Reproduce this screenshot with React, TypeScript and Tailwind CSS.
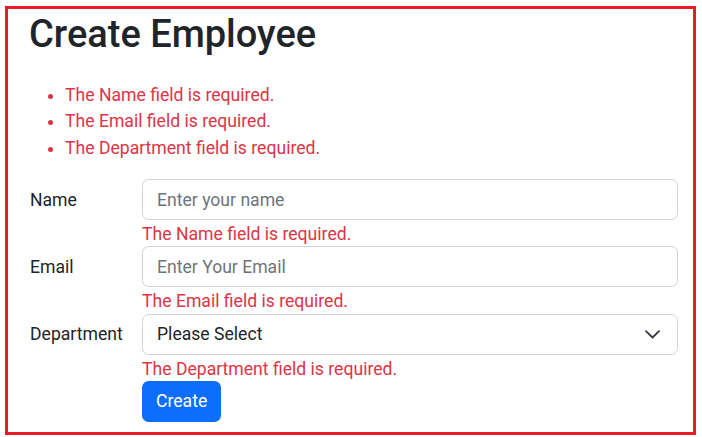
const errors = [
  "The Name field is required.",
  "The Email field is required.",
  "The Department field is required.",
];

function Field({
  label,
  error,
  children,
}: {
  label: string;
  error: string;
  children: React.ReactNode;
}) {
  return (
    <div className="flex">
      <label className="w-[114px] h-[41px] pl-[2px] flex items-center text-[#212529]">
        {label}
      </label>
      <div className="flex-1">
        {children}
        <div className="h-[26.2px] pt-[1px] leading-[26px] text-[#dc3545]">{error}</div>
      </div>
    </div>
  );
}

export default function App() {
  return (
    <div
      className="w-[702px] h-[437px] bg-white pt-[6px] pl-[5px] text-[17.6px] leading-[26.4px]"
      style={{ fontFamily: 'Roboto, "Noto Sans", sans-serif' }}
    >
      <div className="w-[691px] h-[429px] border-[3px] border-[#ed1c24] pl-[20px] pr-[15px]">
        <h1 className="mt-[4px] ml-[1px] h-[42px] text-[38px] leading-[42px] font-medium text-[#212529]">
          Create Employee
        </h1>
        <ul className="mt-[27px] mb-[18px] pl-[37px] list-disc text-[#dc3545] marker:text-[#dc3545]">
          {errors.map((e) => (
            <li key={e}>{e}</li>
          ))}
        </ul>
        <Field label="Name" error="The Name field is required.">
          <input
            placeholder="Enter your name"
            className="w-full h-[41px] px-[14px] border border-[#ced4da] rounded-[6.6px] text-[#212529] placeholder:text-[#6c757d] outline-none"
          />
        </Field>
        <Field label="Email" error="The Email field is required.">
          <input
            placeholder="Enter Your Email"
            className="w-full h-[41px] px-[14px] border border-[#ced4da] rounded-[6.6px] text-[#212529] placeholder:text-[#6c757d] outline-none"
          />
        </Field>
        <Field label="Department" error="The Department field is required.">
          <div className="w-full h-[41px] pl-[14px] pr-[17px] border border-[#ced4da] rounded-[6.6px] flex items-center justify-between text-[#212529]">
            <span>Please Select</span>
            <svg width="15" height="9" viewBox="0 0 15 9" fill="none" className="mt-[1px]">
              <path d="M1 1.2l6.5 6.3 6.5-6.3" stroke="#343a40" strokeWidth="1.8" strokeLinecap="round" strokeLinejoin="round" />
            </svg>
          </div>
        </Field>
        <div className="pl-[114px]">
          <button className="h-[41.5px] px-[14px] bg-[#0d6efd] text-white rounded-[6.6px]">
            Create
          </button>
        </div>
      </div>
    </div>
  );
}
